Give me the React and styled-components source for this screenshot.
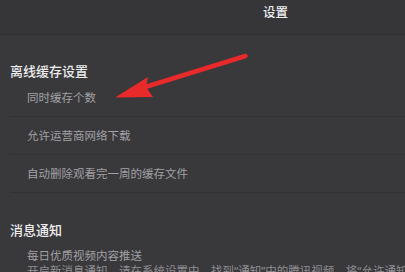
import React from "react";
import styled, { createGlobalStyle } from "styled-components";

const Global = createGlobalStyle`
  html, body { margin: 0; padding: 0; background: #39383b; }
  body { width: 405px; height: 272px; overflow: hidden; font-family: "Noto Sans", "Noto Sans CJK SC", sans-serif; }
`;

const Page = styled.div`
  position: relative;
  width: 405px;
  height: 272px;
  overflow: hidden;
  background: #39383b;
  display: flex;
  flex-direction: column;
`;

const Header = styled.header`
  height: 35px;
  flex: none;
  box-sizing: border-box;
  background: #363538;
  border-bottom: 1px solid #2f2e31;
  display: flex;
  align-items: flex-start;
  padding: 5px 0 0 263px;
`;

const Title = styled.h1`
  margin: 0;
  font-size: 12.5px;
  line-height: 16px;
  font-weight: 500;
  color: #ececee;
`;

const SectionHeader = styled.div`
  height: ${(p) => p.$h}px;
  flex: none;
  display: flex;
  align-items: flex-end;
  padding-left: 10px;
`;

const SectionTitle = styled.h2`
  margin: 0;
  font-size: 13px;
  line-height: 16px;
  font-weight: 500;
  color: #ededef;
`;

const Row = styled.div`
  height: 38px;
  flex: none;
  margin-left: 10px;
  padding-left: 17px;
  border-bottom: 1px solid #323134;
  display: flex;
  align-items: center;
  box-sizing: border-box;
`;

const ItemText = styled.span`
  font-size: 11.5px;
  line-height: 15px;
  color: #a2a1a5;
  white-space: nowrap;
`;

const Block = styled.div`
  padding: 10px 0 0 27px;
  display: flex;
  flex-direction: column;
`;

const Desc = styled.span`
  font-size: 11.5px;
  line-height: 16px;
  color: #8f8e92;
  white-space: nowrap;
`;

const Overlay = styled.svg`
  position: absolute;
  left: 0;
  top: 0;
  pointer-events: none;
`;

export default function App() {
  return (
    <Page>
      <Global />
      <Header>
        <Title>设置</Title>
      </Header>
      <SectionHeader $h={44}>
        <SectionTitle>离线缓存设置</SectionTitle>
      </SectionHeader>
      <Row><ItemText>同时缓存个数</ItemText></Row>
      <Row><ItemText>允许运营商网络下载</ItemText></Row>
      <Row><ItemText>自动删除观看完一周的缓存文件</ItemText></Row>
      <SectionHeader $h={45}>
        <SectionTitle>消息通知</SectionTitle>
      </SectionHeader>
      <Block>
        <ItemText>每日优质视频内容推送</ItemText>
        <Desc>开启新消息通知，请在系统设置中，找到“通知”中的腾讯视频，将“允许通知”打开</Desc>
      </Block>
      <Overlay width="405" height="272" viewBox="0 0 405 272">
        <line x1="245.5" y1="56" x2="142" y2="88" stroke="#e82a2b" strokeWidth="4.5" strokeLinecap="round" />
        <polygon points="115,97.5 148,77 146,87 153,97" fill="#e82a2b" />
      </Overlay>
    </Page>
  );
}
